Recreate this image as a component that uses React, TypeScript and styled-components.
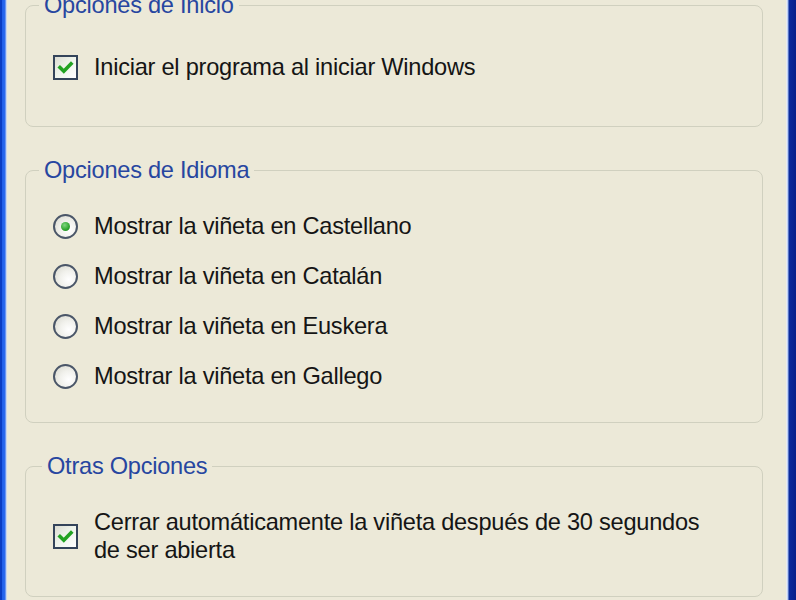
import React from "react";
import styled, { createGlobalStyle } from "styled-components";

const GlobalStyle = createGlobalStyle`
  html, body {
    margin: 0;
    padding: 0;
    background: #ece9d8;
  }
`;

const Window = styled.div`
  display: flex;
  width: 796px;
  height: 600px;
  overflow: hidden;
  background: #ece9d8;
  font-family: "Liberation Sans", Arial, sans-serif;
  font-size: 23.6px;
  letter-spacing: -0.25px;
  color: #151515;
`;

const LeftFrame = styled.div`
  flex: none;
  width: 7px;
  background: linear-gradient(to right, #0a3cc4 0, #0a3cc4 2px, #1f5ee8 2px, #2b6af0 5px, #a9c2f2 6px, #e6eaf0 7px);
`;

const RightFrame = styled.div`
  flex: none;
  width: 10px;
  background: linear-gradient(to right, #f3f2ec 0, #dfe6f6 1px, #9fb8ef 2px, #0b2a9c 3px, #08208a 10px);
`;

const Content = styled.div`
  flex: 1;
  display: flex;
  flex-direction: column;
  gap: 31px;
  margin-top: -7px;
  padding: 0 23px 0 18px;
`;

const Group = styled.fieldset<{ $h: number }>`
  margin: 0;
  padding: 0;
  min-width: 0;
  box-sizing: border-box;
  height: ${p => p.$h}px;
  border: 1px solid #d0d0bf;
  border-radius: 8px;
`;

const Legend = styled.legend<{ $shift?: number }>`
  margin-left: ${p => 13 + (p.$shift || 0)}px;
  padding: 0 5px;
  line-height: 24px;
  color: #2746a0;
`;

const OptionList = styled.div<{ $top: number }>`
  display: flex;
  flex-direction: column;
  gap: 22px;
  padding: ${p => p.$top}px 0 0 27px;
`;

const Option = styled.label`
  display: flex;
  align-items: center;
  gap: 16px;
  line-height: 28px;
  white-space: nowrap;
`;

const CheckBox = styled.span`
  flex: none;
  display: flex;
  align-items: center;
  justify-content: center;
  width: 25px;
  height: 25px;
  box-sizing: border-box;
  border: 2px solid #34445a;
  background: linear-gradient(135deg, #dcdcd2 0%, #eef3ea 45%, #ffffff 100%);
`;

const Radio = styled.span<{ $on?: boolean }>`
  flex: none;
  display: flex;
  align-items: center;
  justify-content: center;
  width: 25px;
  height: 25px;
  box-sizing: border-box;
  border: 2px solid #4a5668;
  border-radius: 50%;
  background: radial-gradient(circle at 65% 65%, #ffffff 0%, #f1f1ec 45%, #d6d6cc 100%);

  &::after {
    content: "";
    display: ${p => (p.$on ? "block" : "none")};
    width: 9px;
    height: 9px;
    border-radius: 50%;
    background: radial-gradient(circle at 40% 35%, #7fd67f 0%, #2ea52e 60%, #1b7f1b 100%);
  }
`;

const Check = () => (
  <svg width="17" height="17" viewBox="0 0 17 17">
    <path d="M3 8.5 L6.8 12.2 L14 4.8" fill="none" stroke="#22a322" strokeWidth="3.6" strokeLinecap="square" />
  </svg>
);

const idiomas = ["Castellano", "Catalán", "Euskera", "Gallego"];

export default function App() {
  return (
    <>
      <GlobalStyle />
      <Window>
        <LeftFrame />
        <Content>
          <Group $h={134}>
            <Legend>Opciones de Inicio</Legend>
            <OptionList $top={36}>
              <Option>
                <CheckBox>
                  <Check />
                </CheckBox>
                Iniciar el programa al iniciar Windows
              </Option>
            </OptionList>
          </Group>
          <Group $h={265}>
            <Legend>Opciones de Idioma</Legend>
            <OptionList $top={30}>
              {idiomas.map((lang, i) => (
                <Option key={lang}>
                  <Radio $on={i === 0} />
                  Mostrar la viñeta en {lang}
                </Option>
              ))}
            </OptionList>
          </Group>
          <Group $h={143}>
            <Legend $shift={3}>Otras Opciones</Legend>
            <OptionList $top={30}>
              <Option>
                <CheckBox>
                  <Check />
                </CheckBox>
                <span>
                  Cerrar automáticamente la viñeta después de 30 segundos
                  <br />
                  de ser abierta
                </span>
              </Option>
            </OptionList>
          </Group>
        </Content>
        <RightFrame />
      </Window>
    </>
  );
}
